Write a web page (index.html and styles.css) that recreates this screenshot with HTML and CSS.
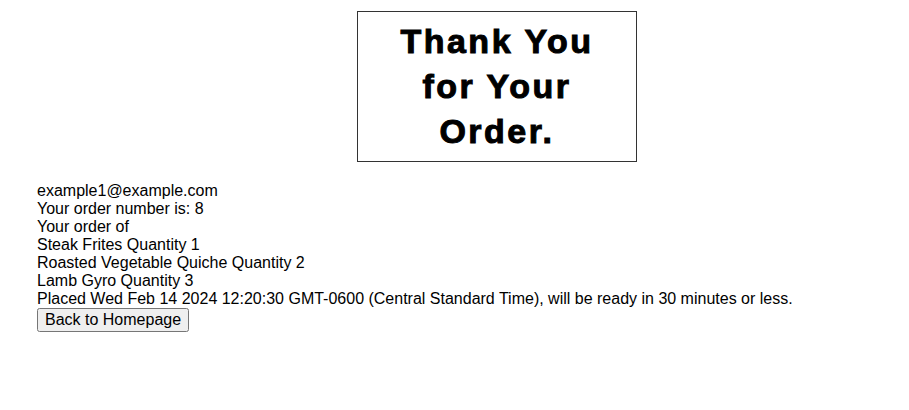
FILE: index.html
```html
<!DOCTYPE html>
<html>
<head>
<meta charset="utf-8">
<link rel="stylesheet" href="styles.css">
</head>
<body>
<div class="card">
  <h1 class="title">Thank You for Your Order.</h1>
</div>
<div class="details">
  <div>example1@example.com</div>
  <div>Your order number is: 8</div>
  <div>Your order of</div>
  <div>Steak Frites Quantity 1</div>
  <div>Roasted Vegetable Quiche Quantity 2</div>
  <div>Lamb Gyro Quantity 3</div>
  <div>Placed Wed Feb 14 2024 12:20:30 GMT-0600 (Central Standard Time), will be ready in 30 minutes or less.</div>
  <button class="home-btn">Back to Homepage</button>
</div>
</body>
</html>
```
FILE: styles.css
```css
body {
  margin: 8px;
  font-family: "Liberation Sans", Arial, sans-serif;
  font-size: 16px;
  color: #000;
  background: #fff;
}
.card {
  width: 278px;
  margin: 3px 0 0 349px;
  border: 1px solid #333;
  padding: 7px 0;
}
.title {
  margin: 0 auto;
  width: 230px;
  text-align: center;
  font-size: 34px;
  line-height: 45px;
  font-weight: 900;
  letter-spacing: 2.5px;
  -webkit-text-stroke: 1px #000;
}
.details {
  margin: 20px 0 0 29px;
  line-height: 18px;
}
.home-btn {
  font-family: inherit;
  font-size: 16px;
  margin: 0;
  padding: 1px 6px;
}
```
